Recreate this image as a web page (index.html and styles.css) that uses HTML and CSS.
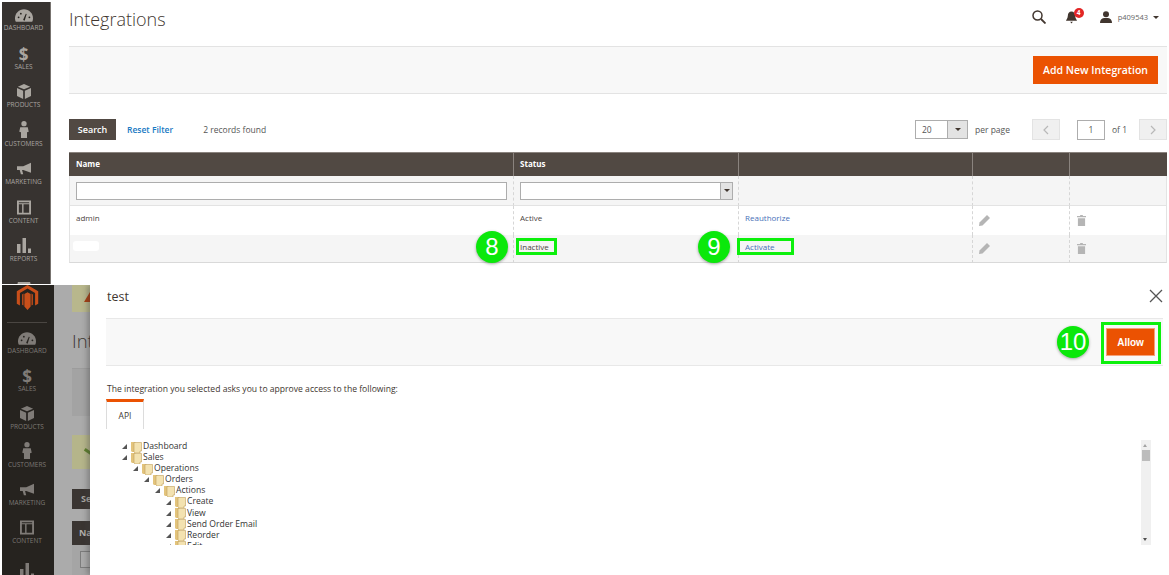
FILE: index.html
```html
<!DOCTYPE html>
<html lang="en">
<head>
<meta charset="utf-8">
<title>Integrations</title>
<link rel="stylesheet" href="styles.css">
</head>
<body>
<svg class="defs" width="0" height="0" aria-hidden="true">
  <symbol id="i-gauge" viewBox="0 0 20 14"><path d="M10 0C4.500 0 0 4.500 0 10c0 1.500.3 2.800.9 4h18.200c.6-1.200.9-2.500.9-4C20 4.500 15.500 0 10 0z" fill="currentColor"/><path d="M9 12l3-7 1 .4-2.300 7.300z" fill="#26231f"/><circle cx="4" cy="9" r="1" fill="#26231f"/><circle cx="6.500" cy="5" r="1" fill="#26231f"/><circle cx="16" cy="9" r="1" fill="#26231f"/></symbol>
  <symbol id="i-box" viewBox="0 0 16 17"><path d="M8 0l7 3-7 3-7-3zM0 4.500l7 3V17l-7-3.500zM16 4.500v9L9 17V7.500z" fill="currentColor"/></symbol>
  <symbol id="i-person" viewBox="0 0 10 18"><circle cx="5" cy="2.800" r="2.800" fill="currentColor"/><path d="M1 6.500h8l1 5-1.800.5V18H1.800v-6L0 11.500z" fill="currentColor"/></symbol>
  <symbol id="i-mega" viewBox="0 0 18 15"><path d="M18 0v13L8 9.500H6.500L8 15H5L3.500 9.500H0v-5h8z" fill="currentColor"/></symbol>
  <symbol id="i-content" viewBox="0 0 15 15"><path fill-rule="evenodd" d="M0 0h15v15H0zM2 4v9h3.500V4zm5 0v9h6V4zM2 2v1h11V2z" fill="currentColor"/></symbol>
  <symbol id="i-bars" viewBox="0 0 14 15"><path d="M0 6h3.500v9H0zM5.500 0H9v15H5.500zM11 10.500h3V15h-3z" fill="currentColor"/></symbol>
  <symbol id="i-stores" viewBox="0 0 16 15"><path d="M1 0h14l1 5H0zM1 6h14v9H1z" fill="currentColor"/></symbol>
  <symbol id="i-folder" viewBox="0 0 11 12"><path d="M0 1h4l1 1v9H1l-1-1z" fill="#e3c47c"/><path d="M3 1.500h7.500V10H9v2H4l-1-1z" fill="#f3e2b0" stroke="#bfa05c" stroke-width=".6"/></symbol>
  <symbol id="i-arrow" viewBox="0 0 5 5"><path d="M5 0v5H0z" fill="#555"/></symbol>
  <symbol id="i-pencil" viewBox="0 0 11 11"><path d="M8 0l3 3-7.500 7.500L0 11l.5-3.500z" fill="currentColor"/></symbol>
  <symbol id="i-trash" viewBox="0 0 10 12"><path d="M3.500 0h3v1H10v1.500H0V1h3.500zM1 3.500h8V12H1z" fill="currentColor"/></symbol>
</svg>

<section class="shot shot-top">
  <nav class="side side-top">
    <a class="nav-item"><svg class="ico w18"><use href="#i-gauge"/></svg><span>Dashboard</span></a>
    <a class="nav-item"><b class="dollar">$</b><span>Sales</span></a>
    <a class="nav-item"><svg class="ico w14"><use href="#i-box"/></svg><span>Products</span></a>
    <a class="nav-item"><svg class="ico w10"><use href="#i-person"/></svg><span>Customers</span></a>
    <a class="nav-item"><svg class="ico w14"><use href="#i-mega"/></svg><span>Marketing</span></a>
    <a class="nav-item"><svg class="ico w14"><use href="#i-content"/></svg><span>Content</span></a>
    <a class="nav-item"><svg class="ico w14"><use href="#i-bars"/></svg><span>Reports</span></a>
    <a class="nav-stub"><svg class="ico w14"><use href="#i-stores"/></svg></a>
  </nav>
  <main class="page">
    <header class="page-head">
      <h1>Integrations</h1>
      <div class="head-tools">
        <svg class="search-ico" viewBox="0 0 14 14"><circle cx="5.500" cy="5.500" r="4.500" fill="none" stroke="#41362f" stroke-width="1.500"/><path d="M9 9l4.500 4.500" stroke="#41362f" stroke-width="1.800"/></svg>
        <span class="bell">
          <svg viewBox="0 0 12 13"><path d="M6 0c2.500 0 4 2 4 4.500 0 3 2 4.500 2 5.500H0c0-1 2-2.500 2-5.500C2 2 3.500 0 6 0zM4.500 11h3L6 13z" fill="#41362f"/></svg>
          <b class="badge">4</b>
        </span>
        <span class="user">
          <svg viewBox="0 0 12 12"><circle cx="6" cy="3.200" r="3" fill="#41362f"/><path d="M0 12c0-3 1.500-4.500 4-5h4c2.500.5 4 2 4 5z" fill="#41362f"/></svg>
          p409543 <i class="caret"></i>
        </span>
      </div>
    </header>
    <div class="actions">
      <button class="btn-primary">Add New Integration</button>
    </div>
    <div class="toolbar">
      <button class="btn-search">Search</button>
      <a class="reset">Reset Filter</a>
      <span class="records">2 records found</span>
      <span class="pager">
        <span class="perpage"><span class="perpage-val">20</span><span class="perpage-btn"><i class="caret"></i></span></span>
        <span class="perpage-label">per page</span>
        <span class="pg-btn"><svg viewBox="0 0 6 10"><path d="M5 1L1 5l4 4" fill="none" stroke="#b8b8b8" stroke-width="1.200"/></svg></span>
        <span class="pg-input">1</span>
        <span class="pg-of">of 1</span>
        <span class="pg-btn"><svg viewBox="0 0 6 10"><path d="M1 1l4 4-4 4" fill="none" stroke="#b8b8b8" stroke-width="1.200"/></svg></span>
      </span>
    </div>
    <table class="grid">
      <colgroup><col class="c1"><col class="c2"><col class="c3"><col class="c4"><col class="c5"></colgroup>
      <thead>
        <tr class="th-row"><th>Name</th><th>Status</th><th></th><th></th><th></th></tr>
        <tr class="filter-row">
          <td><span class="field"></span></td>
          <td><span class="field select"><span class="select-btn"><i class="caret"></i></span></span></td>
          <td></td><td></td><td></td>
        </tr>
      </thead>
      <tbody>
        <tr class="row">
          <td>admin</td><td>Active</td><td><a class="link">Reauthorize</a></td>
          <td><svg class="act-ico pencil"><use href="#i-pencil"/></svg></td>
          <td><svg class="act-ico trash"><use href="#i-trash"/></svg></td>
        </tr>
        <tr class="row alt">
          <td><span class="redact"></span></td>
          <td class="anno-cell"><b class="num num-8">8</b><span class="hl hl-8"></span>Inactive</td>
          <td class="anno-cell"><b class="num num-9">9</b><span class="hl hl-9"></span><a class="link">Activate</a></td>
          <td><svg class="act-ico pencil"><use href="#i-pencil"/></svg></td>
          <td><svg class="act-ico trash"><use href="#i-trash"/></svg></td>
        </tr>
      </tbody>
    </table>
  </main>
</section>

<section class="shot shot-bottom">
  <nav class="side side-bottom">
    <div class="logo-wrap">
      <svg class="logo" viewBox="0 0 24 28"><path d="M12 0l12 7v14l-3.500 2V9L12 4 3.500 9v14L0 21V7z" fill="#c94f1a"/><path d="M12 8l3.500 2v14L12 28l-3.500-4V10zM6 10.500l1.500-1V23L6 22zM18 10.500l-1.500-1V23l1.500-1z" fill="#c94f1a"/></svg>
    </div>
    <a class="nav-item"><svg class="ico w18"><use href="#i-gauge"/></svg><span>Dashboard</span></a>
    <a class="nav-item"><b class="dollar">$</b><span>Sales</span></a>
    <a class="nav-item"><svg class="ico w14"><use href="#i-box"/></svg><span>Products</span></a>
    <a class="nav-item"><svg class="ico w10"><use href="#i-person"/></svg><span>Customers</span></a>
    <a class="nav-item"><svg class="ico w14"><use href="#i-mega"/></svg><span>Marketing</span></a>
    <a class="nav-item"><svg class="ico w14"><use href="#i-content"/></svg><span>Content</span></a>
    <a class="nav-stub-bars"><svg class="ico w14"><use href="#i-bars"/></svg></a>
  </nav>
  <div class="backdrop">
    <div class="bd-banner"><i class="bd-tri"></i></div>
    <div class="bd-title">Int</div>
    <div class="bd-band"></div>
    <div class="bd-success"><i class="bd-check"></i></div>
    <div class="bd-search">Se</div>
    <div class="bd-th">Na</div>
    <div class="bd-filter"><span></span></div>
  </div>
  <div class="modal">
    <header class="modal-head">
      <h2>test</h2>
      <svg class="close" viewBox="0 0 14 14"><path d="M1 1l12 12M13 1L1 13" stroke="#555" stroke-width="1.300"/></svg>
    </header>
    <div class="modal-band">
      <b class="num num-10">10</b>
      <span class="allow-box"><button class="btn-allow">Allow</button></span>
    </div>
    <p class="modal-text">The integration you selected asks you to approve access to the following:</p>
    <div class="tab">API</div>
    <div class="tree-wrap">
      <ul class="tree">
        <li><div class="node"><svg class="tw"><use href="#i-arrow"/></svg><svg class="fd"><use href="#i-folder"/></svg>Dashboard</div></li>
        <li><div class="node"><svg class="tw"><use href="#i-arrow"/></svg><svg class="fd"><use href="#i-folder"/></svg>Sales</div>
          <ul>
            <li><div class="node"><svg class="tw"><use href="#i-arrow"/></svg><svg class="fd"><use href="#i-folder"/></svg>Operations</div>
              <ul>
                <li><div class="node"><svg class="tw"><use href="#i-arrow"/></svg><svg class="fd"><use href="#i-folder"/></svg>Orders</div>
                  <ul>
                    <li><div class="node"><svg class="tw"><use href="#i-arrow"/></svg><svg class="fd"><use href="#i-folder"/></svg>Actions</div>
                      <ul>
                        <li><div class="node"><svg class="tw"><use href="#i-arrow"/></svg><svg class="fd"><use href="#i-folder"/></svg>Create</div></li>
                        <li><div class="node"><svg class="tw"><use href="#i-arrow"/></svg><svg class="fd"><use href="#i-folder"/></svg>View</div></li>
                        <li><div class="node"><svg class="tw"><use href="#i-arrow"/></svg><svg class="fd"><use href="#i-folder"/></svg>Send Order Email</div></li>
                        <li><div class="node"><svg class="tw"><use href="#i-arrow"/></svg><svg class="fd"><use href="#i-folder"/></svg>Reorder</div></li>
                        <li><div class="node"><svg class="tw"><use href="#i-arrow"/></svg><svg class="fd"><use href="#i-folder"/></svg>Edit</div></li>
                      </ul>
                    </li>
                  </ul>
                </li>
              </ul>
            </li>
          </ul>
        </li>
      </ul>
      <div class="scrollbar">
        <i class="sb-up"></i>
        <i class="sb-thumb"></i>
        <i class="sb-down"></i>
      </div>
    </div>
  </div>
</section>
</body>
</html>
```

FILE: styles.css
```css
* { box-sizing: border-box; }
html, body { margin: 0; padding: 0; }
body {
  width: 1169px;
  height: 575px;
  overflow: hidden;
  background: #fff;
  font-family: "Open Sans", "Liberation Sans", sans-serif;
  color: #41362f;
  display: flex;
  flex-direction: column;
}
.defs { position: absolute; }
ul { list-style: none; margin: 0; padding: 0; }
button { font-family: inherit; border: 0; padding: 0; }

.shot { display: flex; margin-left: 2px; overflow: hidden; }
.shot-top { height: 282px; margin-top: 2px; flex: none; }
.shot-bottom { height: 290px; margin-top: 1px; flex: none; }

/* sidebar */
.side {
  flex: none;
  overflow: hidden;
  display: flex;
  flex-direction: column;
  align-items: stretch;
}
.side-top { width: 49px; background: #373330; border-right: 1px solid #77736f; padding-right: 5px; }
.side-bottom { width: 52px; background: #26231f; padding-right: 2px; }
.nav-item {
  flex: none;
  height: 38.500px;
  display: flex;
  flex-direction: column;
  align-items: center;
  justify-content: flex-end;
  color: #aaa6a0;
  padding-bottom: 8.500px;
}
.nav-stub { flex: none; display: flex; justify-content: center; color: #aaa6a0; padding-top: 9px; }
.nav-stub-bars { flex: none; display: flex; justify-content: center; color: #7f7b77; padding-top: 10px; }
.nav-item span { font-size: 6.500px; line-height: 8px; text-transform: uppercase; white-space: nowrap; color: #a8a4a0; }
.side-bottom .nav-item { color: #7f7b77; height: 38.100px; padding-bottom: 7.500px; }
.side-bottom .nav-item span { color: #7c7874; }
.ico { display: block; height: 15px; margin-bottom: 2px; }
.w18 { width: 18px; height: 13px; }
.w14 { width: 14px; }
.w10 { width: 10px; height: 17px; }
.dollar { font-size: 17px; line-height: 17px; font-weight: 700; font-family: "Open Sans", sans-serif; }
.logo-wrap { height: 38px; padding: 0 7px; display: flex; justify-content: center; flex: none; border-bottom: 1px solid #4a4642; margin: 0 5px 1px; }
.logo { width: 23px; height: 25px; flex: none; }

/* top main */
.page { flex: 1; min-width: 0; padding-left: 18px; padding-right: 2px; }
.page-head { height: 44px; display: flex; align-items: center; justify-content: space-between; }
h1 { margin: 0; font-size: 18px; font-weight: 300; color: #41362f; line-height: 24px; position: relative; top: -5px; }
.head-tools { display: flex; align-items: center; font-size: 7.500px; color: #666; position: relative; top: -7px; padding-right: 8px; }
.search-ico { width: 14px; height: 14px; margin-right: 20px; }
.bell { position: relative; width: 13px; height: 13px; margin-right: 21px; display: block; }
.bell svg { display: block; width: 11px; height: 13px; }
.badge { position: absolute; left: 8px; top: -3px; width: 10px; height: 10px; border-radius: 50%; background: #e22626; color: #fff; font-size: 6.500px; line-height: 10px; text-align: center; }
.user { display: flex; align-items: center; gap: 5px; white-space: nowrap; }
.user svg { width: 12px; height: 12px; margin-right: 1px; }
.caret { display: inline-block; width: 0; height: 0; border: 3px solid transparent; border-top: 3.500px solid #41362f; border-bottom: 0; }

.actions {
  height: 48px;
  background: #f8f8f8;
  border-top: 1px solid #e3e3e3;
  border-bottom: 1px solid #e3e3e3;
  display: flex;
  align-items: center;
  justify-content: flex-end;
  padding-right: 9px;
}
.btn-primary { width: 125px; height: 28px; background: #eb5202; color: #fff; font-size: 10.500px; font-weight: 600; }

.toolbar { height: 21px; margin-top: 25px; display: flex; align-items: center; font-size: 8.500px; }
.btn-search { width: 47px; height: 21px; background: #514943; color: #fff; font-size: 9px; font-weight: 600; }
.reset { color: #1979c3; font-weight: 600; margin-left: 11px; font-size: 8.500px; }
.records { margin-left: 30px; color: #555; }
.pager { margin-left: auto; display: flex; align-items: center; color: #555; }
.perpage { width: 53px; height: 19px; border: 1px solid #adadad; display: flex; }
.perpage-val { flex: 1; padding-left: 6px; line-height: 17px; }
.perpage-btn { width: 20px; background: #e3e3e3; border-left: 1px solid #adadad; display: flex; align-items: center; justify-content: center; }
.perpage-label { margin-left: 7px; width: 57px; }
.pg-btn { width: 28px; height: 21px; background: #f0f0f0; border: 1px solid #e3e3e3; display: flex; align-items: center; justify-content: center; }
.pg-btn svg { width: 6px; height: 10px; }
.pg-input { width: 28px; height: 20px; margin-left: 17px; border: 1px solid #adadad; text-align: center; line-height: 18px; }
.pg-of { width: 34px; padding-left: 7px; }

/* table */
.grid {
  width: 1098px;
  table-layout: fixed;
  border-collapse: separate;
  border-spacing: 0;
  margin-top: 12px;
  font-size: 8px;
  color: #4c4541;
}
.c1 { width: 444px; }
.c2 { width: 225px; }
.c3 { width: 234px; }
.c4 { width: 97px; }
.c5 { width: 98px; }
.grid th, .grid td { padding: 0 5px 0 6px; text-align: left; overflow: visible; }
.grid .th-row th {
  height: 24px;
  background: #514943;
  color: #fff;
  font-size: 8px;
  font-weight: 700;
  border-top: 1px solid #8a837e;
  border-left: 1px solid #8a837e;
  padding-bottom: 2px;
}
.grid .th-row th:first-child { border-left: 0; padding-left: 7px; }
.filter-row td { height: 30px; background: #f5f5f5; border-left: 1px dashed #d6d6d6; border-bottom: 1px solid #e3e3e3; }
.filter-row td:first-child { border-left: 1px solid #e3e3e3; }
.filter-row td:last-child { border-right: 1px solid #e3e3e3; }
.grid .filter-row td:first-child { padding-right: 6px; }
.field { display: block; height: 18px; border: 1px solid #adadad; background: #fff; position: relative; }
.select { display: flex; justify-content: flex-end; }
.select-btn { width: 12px; background: #e3e3e3; border-left: 1px solid #adadad; display: flex; align-items: center; justify-content: center; }
.grid .row td { height: 29px; background: #fff; border-left: 1px dashed #d6d6d6; padding-bottom: 6px; }
.grid .row td:first-child { border-left: 1px solid #e3e3e3; }
.grid .row td:last-child { border-right: 1px solid #e3e3e3; }
.grid .row.alt td { height: 28px; background: #f5f5f5; border-bottom: 1px solid #d9d9d9; padding-bottom: 5px; }
.link { color: #4770b8; }
.act-ico { display: block; color: #b5b5b5; margin-top: 6px; }
.row.alt .act-ico { margin-top: 5px; }
.pencil { width: 11px; height: 11px; }
.trash { width: 9px; height: 11px; margin-left: 1px; }
.redact { display: block; width: 26px; height: 10px; background: #fff; margin-left: -3px; margin-top: -1px; border-radius: 3px; filter: blur(.6px); }

/* annotations */
.anno-cell { position: relative; }
.num {
  position: absolute;
  width: 32px;
  height: 32px;
  border-radius: 50%;
  background: #0be80b;
  color: #fff;
  font: 400 24px/32px "Liberation Sans", sans-serif;
  text-align: center;
  box-shadow: 0 1px 3px rgba(0, 0, 0, .35);
  z-index: 2;
}
.num-8 { left: -38px; top: -4px; }
.num-9 { left: -41px; top: -4px; }
.hl { position: absolute; top: 3px; height: 17px; border: 3px solid #0cf00c; }
.hl-8 { left: 2px; width: 41px; }
.hl-9 { left: -2px; width: 57px; }

/* bottom: backdrop */
.backdrop { width: 36px; flex: none; background: #ababab; overflow: hidden; padding-left: 18px; font-size: 9px; }
.bd-banner { height: 27px; width: 40px; background: #b8b78c; padding: 7px 0 0 12px; }
.bd-tri { display: block; width: 0; height: 0; border: 6px solid transparent; border-top: 0; border-bottom: 10px solid #a93e10; }
.bd-title { margin-top: 14px; font-size: 18.500px; font-weight: 300; line-height: 30px; color: #3b3632; white-space: nowrap; }
.bd-band { height: 48px; width: 40px; margin-top: 12px; background: #a3a3a3; border-top: 1px solid #9c9c9c; }
.bd-success { height: 34px; width: 40px; margin-top: 19px; background: #b5b58a; padding: 15px 0 0 12px; }
.bd-check { display: block; width: 8px; height: 3px; background: #5d7f2c; transform: rotate(35deg); }
.bd-search { width: 40px; height: 20px; margin-top: 20px; background: #3a3532; color: #a9a5a1; font-weight: 700; line-height: 20px; padding-left: 9px; }
.bd-th { width: 40px; height: 24px; margin-top: 12px; background: #3a3532; color: #b3afab; font-weight: 700; line-height: 24px; padding-left: 7px; }
.bd-filter { height: 40px; width: 40px; background: #a5a5a5; padding: 6px 0 0 8px; }
.bd-filter span { display: block; height: 17px; background: #ababab; border: 1px solid #7c7c7c; }

/* modal */
.modal { flex: 1; min-width: 0; background: #fff; padding: 0 6px 0 16px; box-shadow: -3px 0 5px rgba(60, 60, 60, .35); position: relative; }
.modal-head { height: 33px; display: flex; align-items: center; justify-content: space-between; padding-left: 1px; }
h2 { margin: 0; font-size: 12.500px; font-weight: 400; color: #41362f; position: relative; top: -5px; }
.close { width: 14px; height: 14px; position: relative; top: -6px; }
.modal-band {
  height: 48px;
  background: #f8f8f8;
  border-top: 1px solid #e8e8e8;
  border-bottom: 1px solid #e8e8e8;
  display: flex;
  align-items: center;
  justify-content: flex-end;
  position: relative;
  padding-right: 2px;
}
.allow-box { border: 3px solid #0cf00c; padding: 3px 3px 3px 2px; display: block; height: 42px; width: 60px; position: relative; top: 1px; }
.btn-allow { display: block; width: 49px; height: 28px; background: #eb5202; border: 1px solid #f5a17a; color: #fff; font-size: 10px; font-weight: 700; font-family: "Liberation Sans", sans-serif; }
.num-10 { right: 74px; top: 7px; }
.modal-text { margin: 17px 0 0; padding-left: 1px; font-size: 8.600px; line-height: 12px; color: #41362f; white-space: nowrap; }
.tab { width: 38px; height: 30px; margin-top: 4px; border: 1px solid #dcdcdc; border-bottom: 0; border-top: 3px solid #eb5202; text-align: center; font-size: 8.500px; line-height: 27px; color: #41362f; }
.tree-wrap { height: 105px; margin-top: 11px; position: relative; overflow: hidden; padding: 1px 0 0 16px; }
.tree { font-size: 8.600px; color: #333; white-space: nowrap; }
.tree ul { padding-left: 11px; }
.node { display: flex; align-items: center; height: 11.100px; line-height: 11.100px; }
.tw { width: 5px; height: 5px; margin-right: 4px; flex: none; }
.fd { width: 11px; height: 12px; margin-right: 1px; flex: none; }
.scrollbar { position: absolute; right: 12px; top: 0; width: 10px; height: 105px; background: #f0f0f0; }
.sb-up, .sb-down { position: absolute; left: 2px; width: 0; height: 0; border: 2.500px solid transparent; }
.sb-up { top: 4px; border-top: 0; border-bottom: 3px solid #a3a3a3; }
.sb-down { bottom: 4px; border-bottom: 0; border-top: 3px solid #505050; }
.sb-thumb { position: absolute; left: 1px; top: 10px; width: 8px; height: 11px; background: #bcbcbc; }
```
